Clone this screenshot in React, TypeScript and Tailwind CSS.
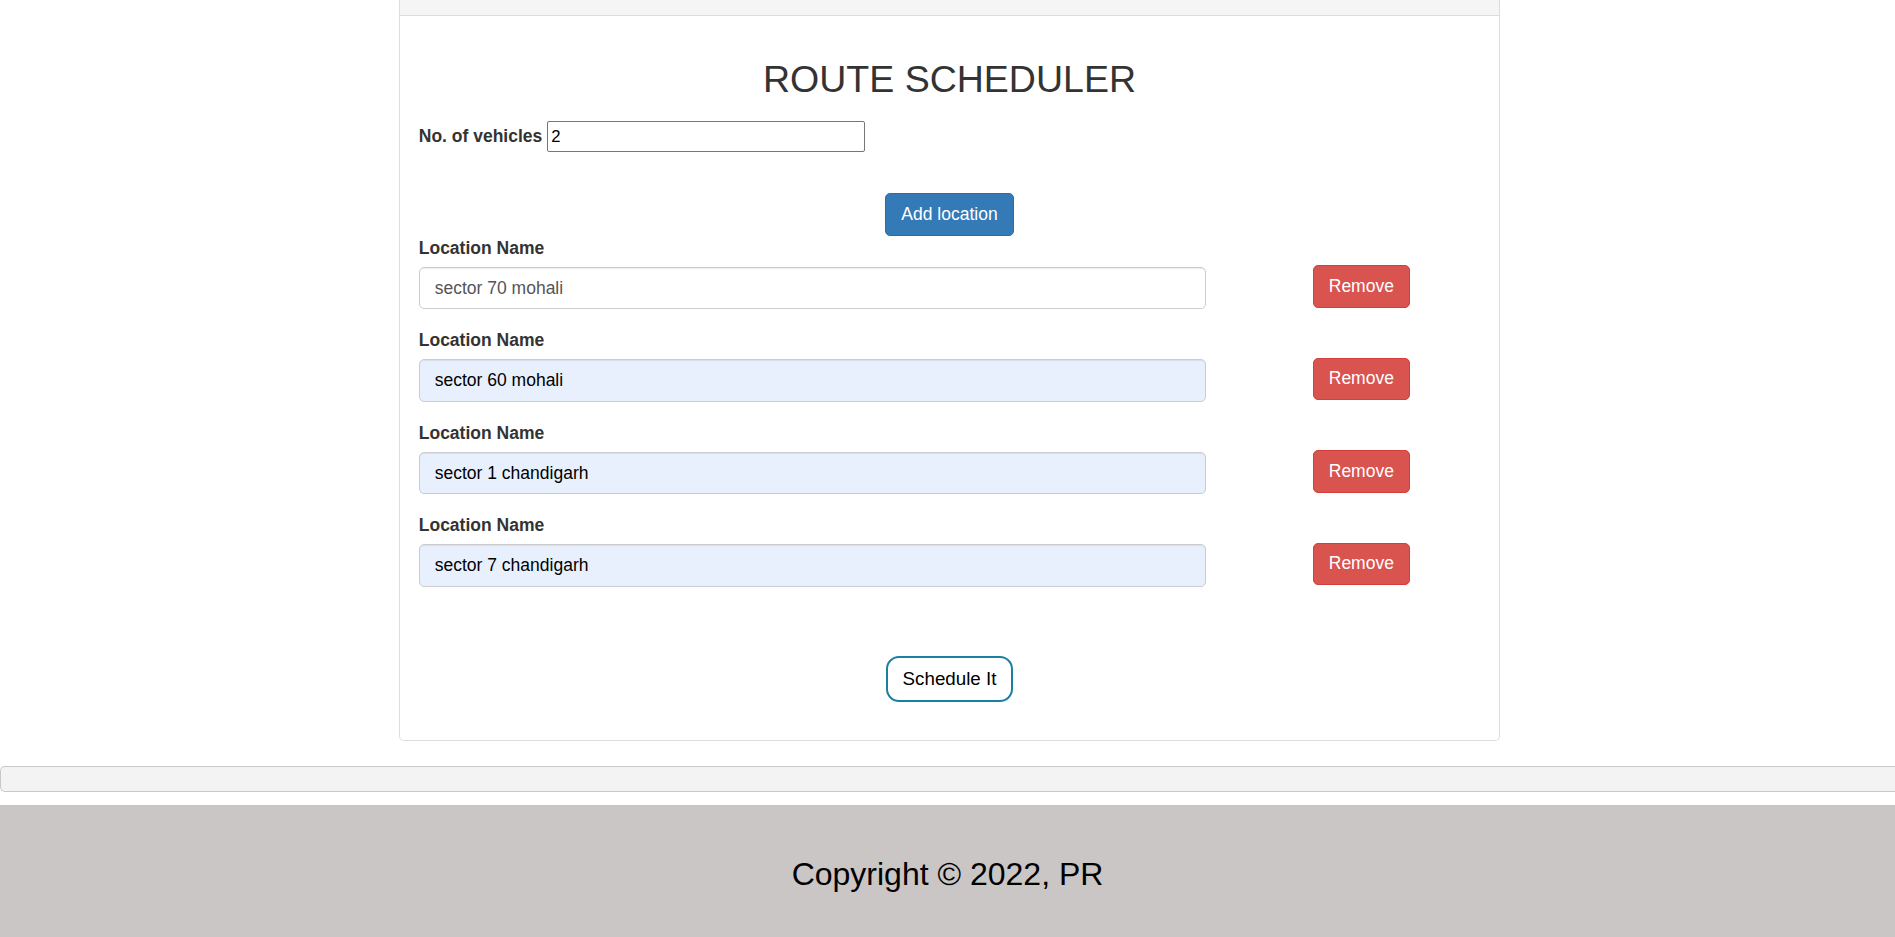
import React from "react";

const locations = [
  { value: "sector 70 mohali", autofill: false },
  { value: "sector 60 mohali", autofill: true },
  { value: "sector 1 chandigarh", autofill: true },
  { value: "sector 7 chandigarh", autofill: true },
];

export default function App() {
  return (
    <div className="min-h-screen overflow-hidden bg-white font-['Liberation_Sans',Arial,sans-serif] text-[17.5px] leading-[25px] text-[#333]">
      <div className="ml-[399px] w-[1101px] rounded-b-[5px] border border-t-0 border-[#ddd] bg-white">
        <div className="h-[16px] border-b border-[#ddd] bg-[#f5f5f5]" />
        <div className="flex flex-col px-[18.75px] pb-[38px]">
          <h2 className="mt-[43px] text-center text-[37.5px] font-normal leading-[41px] text-[#333]">
            ROUTE SCHEDULER
          </h2>
          <div className="mt-[21px] flex h-[31px] items-center">
            <label className="font-bold">No. of vehicles</label>
            <input
              readOnly
              value="2"
              className="ml-[5px] h-[31px] w-[318px] rounded-[2px] border border-[#767676] bg-white px-[3px] text-[16.7px] text-black outline-none"
            />
          </div>
          <div className="mt-[41px] flex justify-center">
            <button className="h-[42.5px] rounded-[5px] border border-[#2e6da4] bg-[#337ab7] px-[15px] text-[17.5px] leading-[25px] text-white">
              Add location
            </button>
          </div>
          <div className="flex flex-col">
            {locations.map((loc, i) => (
              <div key={i} className="mb-[18.75px] flex items-start">
                <div className="w-[787px]">
                  <label className="mb-[6.25px] block font-bold leading-[25px]">Location Name</label>
                  <input
                    readOnly
                    value={loc.value}
                    className={
                      loc.autofill
                        ? "block h-[42.5px] w-[787px] rounded-[5px] border border-[#ccc] bg-[#e8f0fe] px-[15px] text-[17.5px] text-black shadow-[inset_0_1px_1px_rgba(0,0,0,0.075)] outline-none"
                        : "block h-[42.5px] w-[787px] rounded-[5px] border border-[#ccc] bg-white px-[15px] text-[17.5px] text-[#555] shadow-[inset_0_1px_1px_rgba(0,0,0,0.075)] outline-none"
                    }
                  />
                </div>
                <button className="ml-[107px] mt-[29.5px] h-[42.5px] rounded-[5px] border border-[#d43f3a] bg-[#d9534f] px-[15px] text-[17.5px] leading-[25px] text-white">
                  Remove
                </button>
              </div>
            ))}
          </div>
          <div className="mt-[50.5px] flex justify-center">
            <button className="h-[46px] rounded-[13px] border-2 border-[#1b7fa3] bg-white px-[15px] text-[18.75px] leading-[22px] text-black">
              Schedule It
            </button>
          </div>
        </div>
      </div>
      <div className="mt-[25px] h-[26px] rounded-l-[5px] border-y border-l border-[#c8c8c8] bg-[#f3f3f3]" />
      <footer className="mt-[13px] h-[140px] bg-[#cac6c6] pt-[51px] text-center text-[32px] leading-[36px] text-black">
        Copyright © 2022, PR
      </footer>
    </div>
  );
}
